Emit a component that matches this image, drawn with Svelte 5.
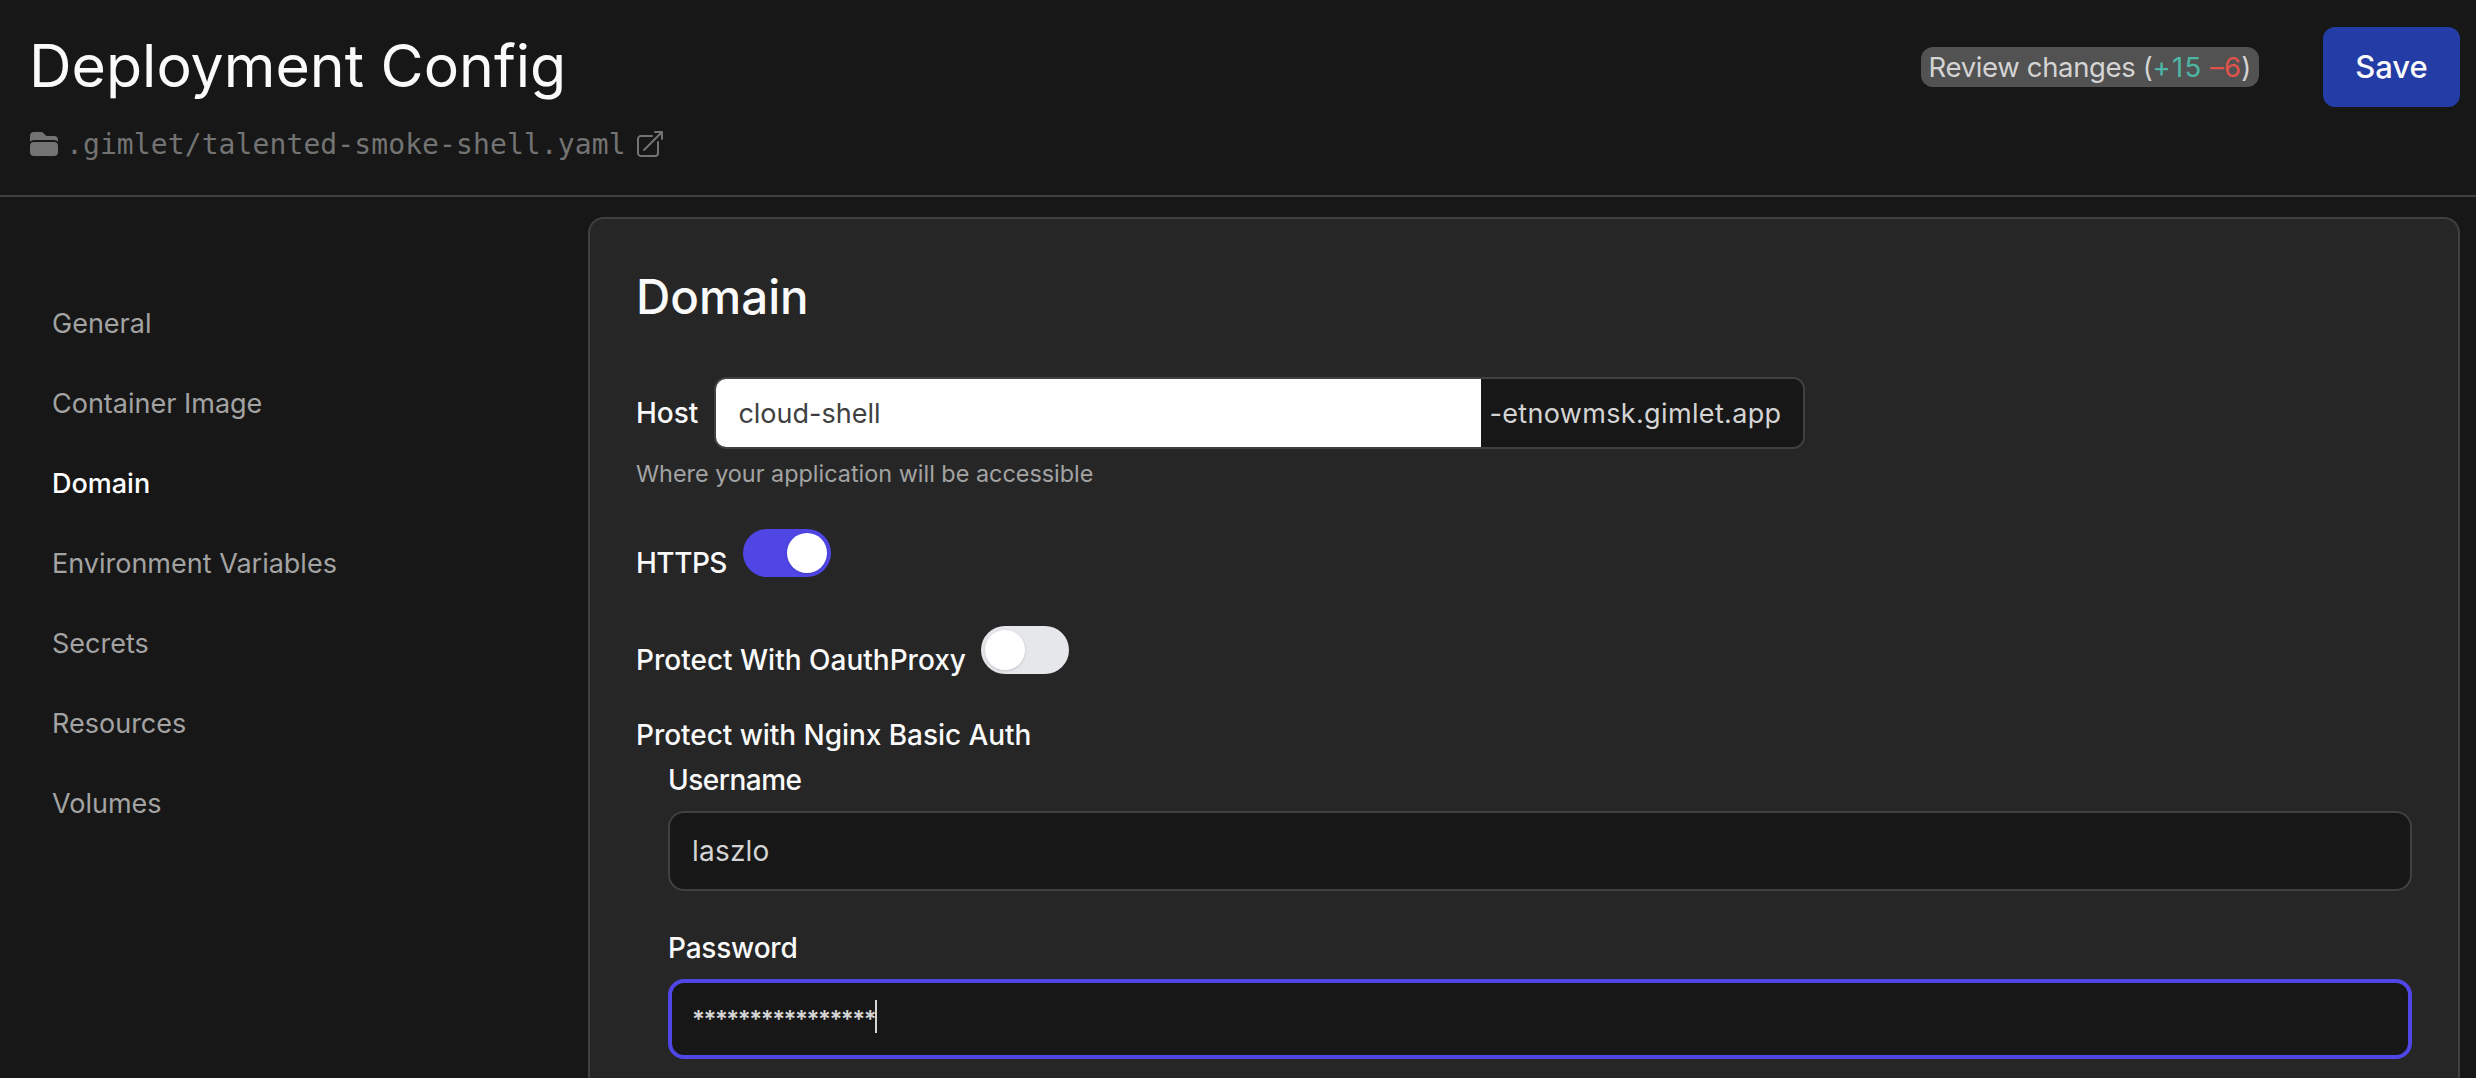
<script>
  const nav = ['General', 'Container Image', 'Domain', 'Environment Variables', 'Secrets', 'Resources', 'Volumes'];
</script>

<div class="page">
  <header class="top">
    <div class="titles">
      <h1>Deployment Config</h1>
      <div class="path">
        <svg class="folder" viewBox="0 0 24 24" fill="currentColor"><path d="M19.5 21a3 3 0 0 0 3-3v-4.5a3 3 0 0 0-3-3h-15a3 3 0 0 0-3 3V18a3 3 0 0 0 3 3h15ZM1.5 10.146V6a3 3 0 0 1 3-3h5.379a2.25 2.25 0 0 1 1.59.659l2.122 2.121c.14.141.331.22.53.22H19.5a3 3 0 0 1 3 3v1.146A4.483 4.483 0 0 0 19.5 9h-15a4.483 4.483 0 0 0-3 1.146Z"/></svg>
        <span class="file">.gimlet/talented-smoke-shell.yaml</span>
        <svg class="ext" viewBox="0 0 24 24" fill="none" stroke="currentColor" stroke-width="1.5" stroke-linecap="round" stroke-linejoin="round"><path d="M13.5 6H5.25A2.25 2.25 0 0 0 3 8.25v10.5A2.25 2.25 0 0 0 5.25 21h10.5A2.25 2.25 0 0 0 18 18.75V10.5m-10.5 6L21 3m0 0h-5.25M21 3v5.25"/></svg>
      </div>
    </div>
    <div class="actions">
      <span class="review">Review changes (<span class="add">+15</span> <span class="del">–6</span>)</span>
      <button class="save">Save</button>
    </div>
  </header>

  <div class="body">
    <nav class="side">
      {#each nav as item}
        <a href="#{item}" class:active={item === 'Domain'}>{item}</a>
      {/each}
    </nav>

    <section class="card">
      <h2>Domain</h2>

      <div class="host-row">
        <span class="label">Host</span>
        <div class="host-box">
          <span class="host-input">cloud-shell</span>
          <span class="host-suffix">-etnowmsk.gimlet.app</span>
        </div>
      </div>
      <p class="help">Where your application will be accessible</p>

      <div class="toggle-row https">
        <span class="label">HTTPS</span>
        <span class="toggle on"><span class="knob"></span></span>
      </div>

      <div class="toggle-row oauth">
        <span class="label">Protect With OauthProxy</span>
        <span class="toggle"><span class="knob"></span></span>
      </div>

      <div class="label nginx">Protect with Nginx Basic Auth</div>
      <div class="nested">
        <div class="label user">Username</div>
        <div class="field">laszlo</div>
        <div class="label pw">Password</div>
        <div class="field focus"><span class="stars">****************</span><span class="caret"></span></div>
      </div>
    </section>
  </div>
</div>

<style>
  :global(body) {
    margin: 0;
    background: #171717;
    overflow: hidden;
    font-family: Inter, "Liberation Sans", sans-serif;
  }
  .page {
    height: 1078px;
    overflow: hidden;
    color: #fff;
  }
  .top {
    display: flex;
    justify-content: space-between;
    align-items: flex-start;
    box-sizing: border-box;
    padding: 26px 16px 0 29px;
    border-bottom: 2px solid #404040;
    height: 197px;
  }
  h1 {
    margin: 0;
    font-size: 59px;
    line-height: 80px;
    font-weight: 400;
    color: #fafafa;
  }
  .path {
    display: flex;
    align-items: center;
    margin-top: 18px;
    margin-left: 1px;
    color: #737373;
    height: 40px;
  }
  .folder {
    width: 32px;
    height: 32px;
    margin-left: -2px;
    flex: none;
  }
  .file {
    font-family: "DejaVu Sans Mono", monospace;
    font-size: 28px;
    letter-spacing: 0.1px;
    margin-left: 6px;
  }
  .ext {
    width: 32px;
    height: 32px;
    margin-left: 8px;
    flex: none;
  }
  .actions {
    display: flex;
    align-items: center;
    height: 80px;
    gap: 64px;
    margin-top: 1px;
  }
  .review {
    background: #525252;
    color: #d4d4d4;
    font-size: 27.5px;
    letter-spacing: -0.35px;
    line-height: 40px;
    padding: 0 8px;
    border-radius: 12px;
  }
  .add { color: #4db6a4; letter-spacing: 1.3px; }
  .del { color: #e0524a; letter-spacing: 0.3px; }
  .save {
    width: 137px;
    height: 80px;
    border: 0;
    border-radius: 12px;
    background: #243ca6;
    color: #fafafa;
    font: 500 31px Inter, sans-serif;
    padding: 0 0 2px;
  }
  .body {
    display: flex;
    padding: 20px 16px 0 0;
  }
  .side {
    width: 588px;
    flex: none;
    box-sizing: border-box;
    padding: 87px 0 0 52px;
    display: flex;
    flex-direction: column;
    gap: 40px;
  }
  .side a {
    font-size: 27px;
    line-height: 40px;
    color: #a3a3a3;
    text-decoration: none;
  }
  .side a.active {
    color: #fff;
    font-weight: 500;
  }
  .card {
    flex: 1;
    min-width: 0;
    box-sizing: border-box;
    background: #262626;
    border: 2px solid #404040;
    border-radius: 16px;
    padding: 46px 46px 0;
    height: 900px;
  }
  h2 {
    margin: 0;
    font-size: 47.5px;
    line-height: 64px;
    font-weight: 500;
    color: #fafafa;
  }
  .label {
    font-size: 28px;
    line-height: 40px;
    font-weight: 500;
    color: #fafafa;
  }
  .host-row {
    display: flex;
    align-items: center;
    gap: 16px;
    margin-top: 48px;
  }
  .host-box {
    display: flex;
    width: 1091px;
    height: 72px;
    box-sizing: border-box;
    border: 2px solid #404040;
    border-radius: 12px;
    overflow: hidden;
    font-size: 27px;
  }
  .host-input {
    flex: 1;
    background: #fff;
    color: #404040;
    padding: 0 22px;
    line-height: 69px;
  }
  .host-suffix {
    width: 322px;
    flex: none;
    box-sizing: border-box;
    background: #171717;
    color: #d4d4d4;
    padding: 0 8px;
    line-height: 69px;
    letter-spacing: 0.35px;
  }
  .help {
    margin: 5px 0 0;
    font-size: 23.4px;
    line-height: 40px;
    color: #a3a3a3;
  }
  .toggle-row {
    display: flex;
    gap: 16px;
    align-items: flex-start;
  }
  .https { margin-top: 49px; }
  .https .label { letter-spacing: -0.5px; }
  .oauth { margin-top: 57px; gap: 15px; }
  .toggle {
    width: 88px;
    height: 48px;
    border-radius: 24px;
    background: #e5e7eb;
    box-sizing: border-box;
    padding: 4px;
    display: block;
    margin-top: -14px;
  }
  .toggle.on {
    background: #4f46e5;
    padding-left: 44px;
  }
  .knob {
    display: block;
    width: 40px;
    height: 40px;
    border-radius: 50%;
    background: #fff;
    box-shadow: 0 1px 3px rgba(0,0,0,.15);
  }
  .nginx { margin-top: 35px; letter-spacing: -0.05px; }
  .nested {
    padding-left: 32px;
    margin-top: 5px;
  }
  .user { letter-spacing: -0.5px; }
  .field {
    box-sizing: border-box;
    height: 80px;
    margin-top: 11px;
    border: 2px solid #404040;
    border-radius: 16px;
    background: #171717;
    color: #d4d4d4;
    font-size: 28px;
    line-height: 76px;
    padding: 0 22px;
    letter-spacing: 0.2px;
  }
  .pw { margin-top: 37px; letter-spacing: -0.2px; }
  .field.focus {
    border: 4px solid #4f46e5;
    line-height: 72px;
    padding: 0 20px;
    display: flex;
    align-items: center;
  }
  .stars {
    font-size: 24px;
    font-weight: 600;
    letter-spacing: -1.5px;
    padding-top: 2px;
  }
  .caret {
    width: 2px;
    height: 33px;
    background: #d4d4d4;
    margin-top: -5px;
  }
</style>
